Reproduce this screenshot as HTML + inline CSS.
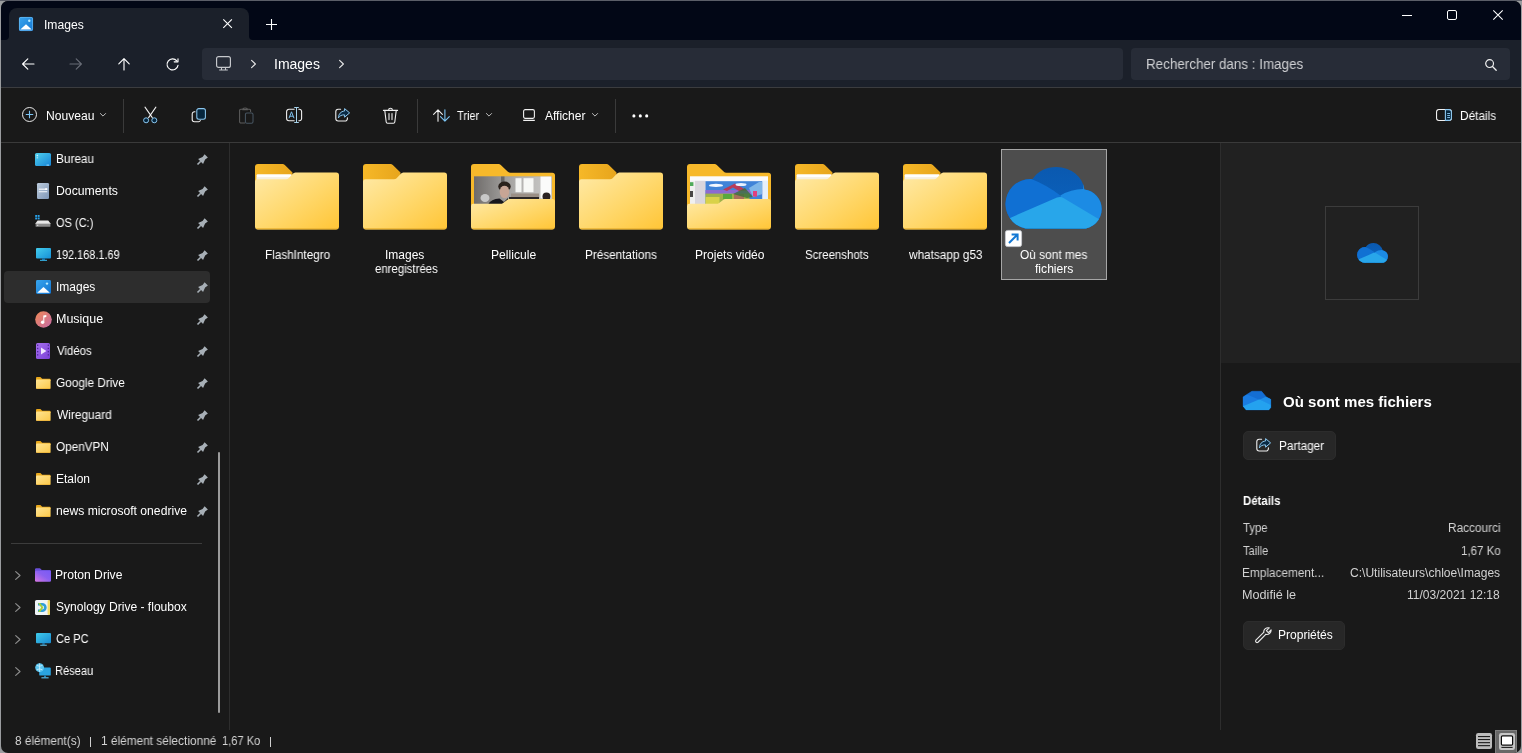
<!DOCTYPE html>
<html><head><meta charset="utf-8"><title>Images</title>
<style>
*{box-sizing:border-box;margin:0;padding:0}
html,body{width:1522px;height:753px;overflow:hidden;background:#9a9c9f;font-family:"Liberation Sans",sans-serif;color:#fff;font-size:12px}
.abs{position:absolute}
svg{overflow:visible}
#top{position:absolute;left:0;top:0;width:1522px;height:1px;background:#5b5e68}
#win{position:absolute;left:1px;top:1px;width:1520px;height:752px;background:#191919;border-radius:7px 7px 7px 7px;overflow:hidden}
.t{position:absolute;white-space:pre;transform-origin:0 0;will-change:transform}
</style></head><body>
<div id="top"></div>
<div id="win">
<div class="abs" style="left:0.00px;top:0.00px;width:1520px;height:39px;background:#020716"></div>
<div class="abs" style="left:8.00px;top:7.00px;width:240px;height:32px;background:#1b202a;border-radius:8px 8px 0 0"></div>
<svg class="abs" style="left:4.00px;top:35.00px;" width="4" height="4" viewBox="0 0 4 4"><path d="M4 0 V4 H0 A4 4 0 0 0 4 0Z" fill="#1b202a"/></svg>
<svg class="abs" style="left:248.00px;top:35.00px;" width="4" height="4" viewBox="0 0 4 4"><path d="M0 0 V4 H4 A4 4 0 0 1 0 0Z" fill="#1b202a"/></svg>
<svg class="abs" style="left:18.00px;top:16.00px;" width="14" height="14" viewBox="0 0 14 14"><defs><linearGradient id="tg" x1="0" y1="0" x2="1" y2="1"><stop offset="0" stop-color="#3aa5ee"/><stop offset="1" stop-color="#1477d2"/></linearGradient></defs>
<rect x="0" y="0" width="14" height="14" rx="1.6" fill="url(#tg)"/><rect x="0.4" y="0.4" width="13.2" height="13.2" rx="1.4" fill="none" stroke="#7cc6f7" stroke-width=".8" opacity=".7"/>
<path d="M1.3 12.6 L7 7.2 L12.7 12.6 Z" fill="#fff"/><circle cx="10.3" cy="3.7" r="1.2" fill="#b9ecff"/></svg>
<div class="t" style="left:42.58px;top:15.84px;font-size:12px;line-height:16px;transform:scaleX(1.0103);color:#fff;">Images</div>
<svg class="abs" style="left:222.00px;top:18.00px;" width="9" height="9" viewBox="0 0 9 9"><path d="M0.3 0.3 L8.9 8.9 M8.9 0.3 L0.3 8.9" stroke="#fff" stroke-width="1.1" fill="none"/></svg>
<svg class="abs" style="left:265.00px;top:18.00px;" width="11" height="11" viewBox="0 0 11 11"><path d="M5.5 0 V11 M0 5.5 H11" stroke="#fff" stroke-width="1.1" fill="none"/></svg>
<div class="abs" style="left:1401.00px;top:14.00px;width:10px;height:1px;background:#fff"></div>
<div class="abs" style="left:1446.00px;top:9.00px;width:10px;height:10px;border:1px solid #fff;border-radius:2px"></div>
<svg class="abs" style="left:1492.00px;top:9.00px;" width="10" height="10" viewBox="0 0 10 10"><path d="M0.3 0.3 L9.7 9.7 M9.7 0.3 L0.3 9.7" stroke="#fff" stroke-width="1.05" fill="none"/></svg>
<div class="abs" style="left:0.00px;top:39.00px;width:1520px;height:47px;background:#1b202a"></div>
<div class="abs" style="left:0.00px;top:86.00px;width:1520px;height:1px;background:#3b3c3f"></div>
<svg class="abs" style="left:21.00px;top:56.50px;" width="12" height="12" viewBox="0 0 12 12"><path d="M12 6 H0.8 M5.8 0.8 L0.6 6 L5.8 11.2" stroke="#fff" stroke-width="1.15" fill="none" stroke-linecap="round" stroke-linejoin="round"/></svg>
<svg class="abs" style="left:69.00px;top:56.50px;" width="12" height="12" viewBox="0 0 12 12"><path d="M0 6 H11.2 M6.2 0.8 L11.4 6 L6.2 11.2" stroke="#686c76" stroke-width="1.15" fill="none" stroke-linecap="round" stroke-linejoin="round"/></svg>
<svg class="abs" style="left:116.50px;top:57.00px;" width="12" height="12" viewBox="0 0 12 12"><path d="M6 12 V0.8 M0.8 5.8 L6 0.6 L11.2 5.8" stroke="#fff" stroke-width="1.15" fill="none" stroke-linecap="round" stroke-linejoin="round"/></svg>
<svg class="abs" style="left:164.50px;top:56.50px;" width="13" height="13" viewBox="0 0 13 13"><path d="M12 7.35 A5.5 5.5 0 1 1 10.8 2.86" stroke="#fff" stroke-width="1.15" fill="none" stroke-linecap="round"/><path d="M12 0.7 V3.8 H8.2" stroke="#fff" stroke-width="1.15" fill="none" stroke-linecap="round" stroke-linejoin="round"/></svg>
<div class="abs" style="left:201.00px;top:47.00px;width:921px;height:32px;background:#272c37;border-radius:4px"></div>
<svg class="abs" style="left:215.00px;top:55.00px;" width="15" height="15" viewBox="0 0 15 15"><rect x="0.6" y="0.6" width="13.8" height="10.8" rx="2" fill="none" stroke="#c6c8cc" stroke-width="1.15"/><path d="M5.5 11.5 V13.6 M9.5 11.5 V13.6 M3.2 14 H11.8" stroke="#c6c8cc" stroke-width="1.1" fill="none"/></svg>
<svg class="abs" style="left:250.00px;top:59.30px;" width="5" height="8" viewBox="0 0 5 8"><path d="M0.6 0.4 L4.4 4 L0.6 7.6" stroke="#e6e6e6" stroke-width="1.15" fill="none" stroke-linecap="round" stroke-linejoin="round"/></svg>
<div class="t" style="left:273.01px;top:53.85px;font-size:14px;line-height:18px;transform:scaleX(0.9975);color:#fff;">Images</div>
<svg class="abs" style="left:338.00px;top:59.30px;" width="5" height="8" viewBox="0 0 5 8"><path d="M0.6 0.4 L4.4 4 L0.6 7.6" stroke="#e6e6e6" stroke-width="1.15" fill="none" stroke-linecap="round" stroke-linejoin="round"/></svg>
<div class="abs" style="left:1130.00px;top:47.00px;width:379px;height:32px;background:#272c37;border-radius:4px"></div>
<div class="t" style="left:1144.60px;top:53.85px;font-size:14px;line-height:18px;transform:scaleX(0.9573);color:#cfd0d3;">Rechercher dans : Images</div>
<svg class="abs" style="left:1484.00px;top:57.50px;" width="12" height="12" viewBox="0 0 12 12"><circle cx="4.6" cy="4.6" r="3.9" fill="none" stroke="#f0f0f0" stroke-width="1.2"/><path d="M7.5 7.5 L11.2 11.2" stroke="#f0f0f0" stroke-width="1.3" stroke-linecap="round"/></svg>
<div class="abs" style="left:0.00px;top:141.00px;width:1520px;height:1px;background:#3a3a3a"></div>
<svg class="abs" style="left:21.00px;top:106.00px;" width="15" height="15" viewBox="0 0 15 15"><circle cx="7.5" cy="7.5" r="7" fill="none" stroke="#e8e8e8" stroke-width="1"/><path d="M7.5 3.8 V11.2 M3.8 7.5 H11.2" stroke="#7cc4f3" stroke-width="1.1" fill="none"/></svg>
<div class="t" style="left:44.51px;top:106.54px;font-size:12px;line-height:16px;transform:scaleX(1.0096);color:#fff;">Nouveau</div>
<svg class="abs" style="left:99.00px;top:112.30px;" width="6" height="4" viewBox="0 0 6 4"><path d="M0.4 0.5 L3 3.1 L5.6 0.5" stroke="#bdbdbd" stroke-width="1" fill="none" stroke-linecap="round" stroke-linejoin="round"/></svg>
<div class="abs" style="left:122.00px;top:98.00px;width:1px;height:34px;background:#3a3a3a"></div>
<svg class="abs" style="left:142.00px;top:105.00px;" width="15" height="18" viewBox="0 0 15 18"><path d="M2 1.1 L9.3 11.6 M12.9 1.1 L5.6 11.6" stroke="#f0f0f0" stroke-width="1.05" fill="none" stroke-linecap="round"/>
<circle cx="3.1" cy="14.3" r="2.5" fill="#04263f" stroke="#8cc8f0" stroke-width="1"/><circle cx="11.3" cy="14.3" r="2.5" fill="#04263f" stroke="#8cc8f0" stroke-width="1"/></svg>
<svg class="abs" style="left:189.50px;top:106.50px;" width="16" height="15" viewBox="0 0 16 15"><path d="M4 3.8 H3.4 A2.2 2.2 0 0 0 1.2 6 V11.6 A2.2 2.2 0 0 0 3.4 13.8 H7.6 A2 2 0 0 0 9.3 12.6" stroke="#f0f0f0" stroke-width="1.1" fill="none" stroke-linecap="round"/>
<rect x="5.8" y="0.6" width="8.6" height="10.6" rx="2" fill="#06263d" stroke="#8cc8f0" stroke-width="1.05"/></svg>
<svg class="abs" style="left:238.00px;top:105.50px;" width="15" height="17" viewBox="0 0 15 17"><path d="M6 16 H1.8 A1.2 1.2 0 0 1 0.6 14.8 V3.4 A1.2 1.2 0 0 1 1.8 2.2 H3.8 M8.4 2.2 H10.4 A1.2 1.2 0 0 1 11.6 3.4 V5" stroke="#5c5c5c" stroke-width="1.05" fill="none"/>
<path d="M3.8 2.6 A2.3 1.6 0 0 1 8.4 2.6 Z" stroke="#5c5c5c" stroke-width="1.05" fill="none"/>
<rect x="6.4" y="6" width="7.6" height="10.2" rx="1.5" fill="none" stroke="#475561" stroke-width="1.05"/></svg>
<svg class="abs" style="left:285.00px;top:106.00px;" width="16" height="16" viewBox="0 0 16 16"><path d="M8.6 2.3 H3 A2.4 2.4 0 0 0 0.6 4.7 V11.3 A2.4 2.4 0 0 0 3 13.7 H8.6 M12.4 2.3 H13.4 A2.2 2.2 0 0 1 15.6 4.5 V11.5 A2.2 2.2 0 0 1 13.4 13.7 H12.4" stroke="#f0f0f0" stroke-width="1.1" fill="none"/>
<path d="M8.2 0.5 H12.8 M8.2 15.5 H12.8 M10.5 0.5 V15.5" stroke="#a8d4ec" stroke-width="1.05" fill="none"/>
<path d="M3 11.2 L5.5 4.8 L8 11.2 M3.9 9.2 H7.1" stroke="#7cc0ee" stroke-width="1" fill="none" stroke-linejoin="round"/></svg>
<svg class="abs" style="left:334.00px;top:107.00px;" width="16" height="14" viewBox="0 0 16 14"><path d="M5.6 1.2 H3.2 A2.4 2.4 0 0 0 0.8 3.6 V10.6 A2.4 2.4 0 0 0 3.2 13 H10 A2.4 2.4 0 0 0 12.4 10.6 V9.8" stroke="#f0f0f0" stroke-width="1.1" fill="none" stroke-linecap="round"/>
<path d="M9.6 0.6 L14.6 4.9 L9.6 9.2 V6.9 C6.6 6.7 4.6 7.9 3.4 9.9 C3.6 6.1 5.8 3.3 9.6 3 Z" fill="#0a2a44" stroke="#8cc8f0" stroke-width="1" stroke-linejoin="round"/></svg>
<svg class="abs" style="left:381.50px;top:105.50px;" width="15" height="17" viewBox="0 0 15 17"><path d="M0.4 3.4 H14.6" stroke="#f0f0f0" stroke-width="1.1" stroke-linecap="round"/><path d="M5.6 3.2 A1.9 1.9 0 0 1 9.4 3.2" stroke="#f0f0f0" stroke-width="1.05" fill="none"/>
<path d="M1.8 3.6 L3.2 15 A1.4 1.4 0 0 0 4.6 16.2 H10.4 A1.4 1.4 0 0 0 11.8 15 L13.2 3.6" stroke="#f0f0f0" stroke-width="1.1" fill="none"/>
<path d="M6 6.6 V12.6 M9 6.6 V12.6" stroke="#f0f0f0" stroke-width="1.1" stroke-linecap="round"/></svg>
<div class="abs" style="left:416.00px;top:98.00px;width:1px;height:34px;background:#3a3a3a"></div>
<svg class="abs" style="left:431.50px;top:107.50px;" width="17" height="13" viewBox="0 0 17 13"><path d="M5 12.3 V0.9 M0.6 5.3 L5 0.8 L9.4 5.3" stroke="#f0f0f0" stroke-width="1.1" fill="none" stroke-linecap="round" stroke-linejoin="round"/>
<path d="M11.9 0.7 V12.1 M7.5 7.7 L11.9 12.2 L16.3 7.7" stroke="#7cc4f3" stroke-width="1.1" fill="none" stroke-linecap="round" stroke-linejoin="round"/></svg>
<div class="t" style="left:456.05px;top:106.54px;font-size:12px;line-height:16px;transform:scaleX(0.9176);color:#fff;">Trier</div>
<svg class="abs" style="left:485.30px;top:112.30px;" width="6" height="4" viewBox="0 0 6 4"><path d="M0.4 0.5 L3 3.1 L5.6 0.5" stroke="#bdbdbd" stroke-width="1" fill="none" stroke-linecap="round" stroke-linejoin="round"/></svg>
<svg class="abs" style="left:522.00px;top:108.00px;" width="12" height="12" viewBox="0 0 12 12"><rect x="0.6" y="0.6" width="10.8" height="8.8" rx="1.6" fill="none" stroke="#f0f0f0" stroke-width="1.1"/><path d="M0.2 11.4 H11.8" stroke="#f0f0f0" stroke-width="1.1"/></svg>
<div class="t" style="left:544.38px;top:106.54px;font-size:12px;line-height:16px;transform:scaleX(0.9936);color:#fff;">Afficher</div>
<svg class="abs" style="left:591.20px;top:112.30px;" width="6" height="4" viewBox="0 0 6 4"><path d="M0.4 0.5 L3 3.1 L5.6 0.5" stroke="#bdbdbd" stroke-width="1" fill="none" stroke-linecap="round" stroke-linejoin="round"/></svg>
<div class="abs" style="left:614.00px;top:98.00px;width:1px;height:34px;background:#3a3a3a"></div>
<svg class="abs" style="left:631.00px;top:113.00px;" width="17" height="4" viewBox="0 0 17 4"><circle cx="1.9" cy="1.9" r="1.55" fill="#fff"/><circle cx="8.3" cy="1.9" r="1.55" fill="#fff"/><circle cx="14.7" cy="1.9" r="1.55" fill="#fff"/></svg>
<svg class="abs" style="left:1435.00px;top:108.00px;" width="16" height="12" viewBox="0 0 16 12"><rect x="0.55" y="0.55" width="14.9" height="10.9" rx="2.4" fill="none" stroke="#f0f0f0" stroke-width="1.1"/>
<path d="M9.4 0.6 H13 A2.4 2.4 0 0 1 15.4 3 V9 A2.4 2.4 0 0 1 13 11.4 H9.4 Z" fill="#06263d" stroke="#8cc8f0" stroke-width="1.1"/>
<path d="M11.2 4.5 H14 M11.2 6.5 H14 M11.2 8.5 H14" stroke="#8cc8f0" stroke-width="0.9"/></svg>
<div class="t" style="left:1458.83px;top:106.84px;font-size:12px;line-height:16px;transform:scaleX(0.9841);color:#fff;">Détails</div>
<div class="abs" style="left:228.00px;top:142.00px;width:1px;height:587px;background:#2d2d2d"></div>
<div class="abs" style="left:3.00px;top:270.00px;width:206px;height:32px;background:#2d2d2d;border-radius:4px"></div>
<div class="abs" style="left:217.00px;top:451.00px;width:2px;height:261px;background:#9b9b9b;border-radius:1px"></div>
<div class="abs" style="left:10.00px;top:542.00px;width:191px;height:1px;background:#3c3c3c"></div>
<svg class="abs" style="left:34.00px;top:151.50px;" width="16" height="13" viewBox="0 0 16 13"><defs><linearGradient id="bu" x1="0" y1="0" x2="1" y2="1"><stop offset="0" stop-color="#4fd0ee"/><stop offset="1" stop-color="#1784d6"/></linearGradient></defs>
<rect width="16" height="13" rx="1.6" fill="url(#bu)"/><rect x="1.6" y="1.8" width="1.5" height="1.5" fill="#c9f2ff"/><rect x="1.6" y="4.2" width="1.5" height="1.2" fill="#aee6fb"/><rect x="11.5" y="11.6" width="2.5" height="1" fill="#9cdcff"/></svg>
<div class="t" style="left:54.63px;top:149.74px;font-size:12px;line-height:16px;transform:scaleX(0.9834);color:#fff;">Bureau</div>
<svg class="abs" style="left:195.50px;top:152.90px;" width="11" height="11" viewBox="0 0 11 11"><g transform="rotate(45 5.5 5.5)"><path d="M3.2 0.2 H7.8 L7.3 3.6 L9 8.2 H2 L3.7 3.6 Z" fill="#a7afb6"/><path d="M5.5 8 V12.6" stroke="#a7afb6" stroke-width="1.6"/></g></svg>
<svg class="abs" style="left:36.00px;top:182.00px;" width="12" height="16" viewBox="0 0 12 16"><defs><linearGradient id="dc" x1="0" y1="0" x2="1" y2="1"><stop offset="0" stop-color="#bccbdc"/><stop offset="1" stop-color="#7f97b8"/></linearGradient></defs>
<rect width="12" height="16" rx="1.2" fill="url(#dc)"/><rect x="1.8" y="5.6" width="8.4" height="1.2" fill="#f3f6fa"/><rect x="1.8" y="8" width="8.4" height="1.3" fill="#e1e8f1"/><rect x="8.2" y="5.2" width="2" height="1.8" fill="#fff"/></svg>
<div class="t" style="left:54.60px;top:181.74px;font-size:12px;line-height:16px;transform:scaleX(1.0207);color:#fff;">Documents</div>
<svg class="abs" style="left:195.50px;top:184.90px;" width="11" height="11" viewBox="0 0 11 11"><g transform="rotate(45 5.5 5.5)"><path d="M3.2 0.2 H7.8 L7.3 3.6 L9 8.2 H2 L3.7 3.6 Z" fill="#a7afb6"/><path d="M5.5 8 V12.6" stroke="#a7afb6" stroke-width="1.6"/></g></svg>
<svg class="abs" style="left:34.00px;top:214.20px;" width="16" height="12" viewBox="0 0 16 12"><rect x="0.2" y="0" width="1.9" height="1.9" fill="#29a3ec"/><rect x="2.7" y="0" width="1.9" height="1.9" fill="#29a3ec"/><rect x="0.2" y="2.5" width="1.9" height="1.9" fill="#29a3ec"/><rect x="2.7" y="2.5" width="1.9" height="1.9" fill="#29a3ec"/>
<path d="M2.6 5.4 H13.2 L15.4 8.2 H0.6 Z" fill="#e8e8e8"/><rect x="0.6" y="8" width="14.8" height="3.8" rx="0.6" fill="#8c8c8c"/><rect x="0.6" y="8" width="14.8" height="1" fill="#c9c9c9"/><rect x="2" y="9.8" width="1.3" height="1" fill="#e0e0e0"/></svg>
<div class="t" style="left:55.08px;top:213.74px;font-size:12px;line-height:16px;transform:scaleX(0.9174);color:#fff;">OS (C:)</div>
<svg class="abs" style="left:195.50px;top:216.90px;" width="11" height="11" viewBox="0 0 11 11"><g transform="rotate(45 5.5 5.5)"><path d="M3.2 0.2 H7.8 L7.3 3.6 L9 8.2 H2 L3.7 3.6 Z" fill="#a7afb6"/><path d="M5.5 8 V12.6" stroke="#a7afb6" stroke-width="1.6"/></g></svg>
<svg class="abs" style="left:34.60px;top:247.00px;" width="15" height="13" viewBox="0 0 15 13"><defs><linearGradient id="mo" x1="0" y1="0" x2="1" y2="1"><stop offset="0" stop-color="#43cdee"/><stop offset="1" stop-color="#1690d6"/></linearGradient></defs>
<rect width="15" height="10.4" rx="1" fill="url(#mo)"/><rect x="6" y="10.4" width="3" height="1.5" fill="#1379b8"/><rect x="4" y="11.8" width="7" height="1.1" fill="#35aee0"/></svg>
<div class="t" style="left:55.17px;top:245.74px;font-size:12px;line-height:16px;transform:scaleX(0.9069);color:#fff;">192.168.1.69</div>
<svg class="abs" style="left:195.50px;top:248.90px;" width="11" height="11" viewBox="0 0 11 11"><g transform="rotate(45 5.5 5.5)"><path d="M3.2 0.2 H7.8 L7.3 3.6 L9 8.2 H2 L3.7 3.6 Z" fill="#a7afb6"/><path d="M5.5 8 V12.6" stroke="#a7afb6" stroke-width="1.6"/></g></svg>
<svg class="abs" style="left:34.60px;top:278.80px;" width="15" height="14" viewBox="0 0 15 14"><defs><linearGradient id="im" x1="0" y1="0" x2="1" y2="1"><stop offset="0" stop-color="#38a6ef"/><stop offset="1" stop-color="#1273cf"/></linearGradient></defs>
<rect width="15" height="14" rx="1.4" fill="url(#im)"/><path d="M1.2 12.8 L7.5 7 L13.8 12.8 Z" fill="#fff"/><circle cx="11" cy="3.6" r="1.2" fill="#b9ecff"/></svg>
<div class="t" style="left:54.50px;top:277.74px;font-size:12px;line-height:16px;transform:scaleX(0.9918);color:#fff;">Images</div>
<svg class="abs" style="left:195.50px;top:280.90px;" width="11" height="11" viewBox="0 0 11 11"><g transform="rotate(45 5.5 5.5)"><path d="M3.2 0.2 H7.8 L7.3 3.6 L9 8.2 H2 L3.7 3.6 Z" fill="#a7afb6"/><path d="M5.5 8 V12.6" stroke="#a7afb6" stroke-width="1.6"/></g></svg>
<svg class="abs" style="left:33.50px;top:309.60px;" width="17" height="17" viewBox="0 0 17 17"><defs><linearGradient id="mu" x1="0" y1="0" x2="1" y2="1"><stop offset="0" stop-color="#f08a56"/><stop offset="1" stop-color="#c56aa6"/></linearGradient></defs>
<circle cx="8.5" cy="8.5" r="8.3" fill="url(#mu)"/><path d="M8.3 11.2 V4.6 L11.3 4 V6 L9.3 6.4 V11.2" fill="#fff"/><circle cx="7.6" cy="11.3" r="1.7" fill="#fff"/></svg>
<div class="t" style="left:54.58px;top:309.74px;font-size:12px;line-height:16px;transform:scaleX(1.0401);color:#fff;">Musique</div>
<svg class="abs" style="left:195.50px;top:312.90px;" width="11" height="11" viewBox="0 0 11 11"><g transform="rotate(45 5.5 5.5)"><path d="M3.2 0.2 H7.8 L7.3 3.6 L9 8.2 H2 L3.7 3.6 Z" fill="#a7afb6"/><path d="M5.5 8 V12.6" stroke="#a7afb6" stroke-width="1.6"/></g></svg>
<svg class="abs" style="left:34.90px;top:342.00px;" width="14" height="16" viewBox="0 0 14 16"><defs><linearGradient id="vi" x1="0" y1="0" x2="1" y2="1"><stop offset="0" stop-color="#a670ee"/><stop offset="1" stop-color="#7a3fd6"/></linearGradient></defs>
<rect width="14" height="16" rx="1.5" fill="url(#vi)"/><path d="M5 4.6 L10.4 8 L5 11.4 Z" fill="#f0e6ff"/>
<g fill="#4d2799"><rect x="1" y="1.6" width="1.3" height="1.3"/><rect x="1" y="4.8" width="1.3" height="1.3"/><rect x="1" y="8" width="1.3" height="1.3"/><rect x="1" y="11.2" width="1.3" height="1.3"/><rect x="11.7" y="1.6" width="1.3" height="1.3"/><rect x="11.7" y="4.8" width="1.3" height="1.3"/><rect x="11.7" y="8" width="1.3" height="1.3"/><rect x="11.7" y="11.2" width="1.3" height="1.3"/></g></svg>
<div class="t" style="left:55.55px;top:341.74px;font-size:12px;line-height:16px;transform:scaleX(0.9501);color:#fff;">Vidéos</div>
<svg class="abs" style="left:195.50px;top:344.90px;" width="11" height="11" viewBox="0 0 11 11"><g transform="rotate(45 5.5 5.5)"><path d="M3.2 0.2 H7.8 L7.3 3.6 L9 8.2 H2 L3.7 3.6 Z" fill="#a7afb6"/><path d="M5.5 8 V12.6" stroke="#a7afb6" stroke-width="1.6"/></g></svg>
<svg class="abs" style="left:34.60px;top:376.00px;" width="14.6" height="12" viewBox="0 0 14.6 12"><defs><linearGradient id="fs" x1="0" y1="0" x2="1" y2="1"><stop offset="0" stop-color="#ffe594"/><stop offset="1" stop-color="#fbc849"/></linearGradient></defs>
<path d="M0 1.1 A1 1 0 0 1 1 0.1 H4.4 L6.2 1.8 H13.6 A1 1 0 0 1 14.6 2.8 V4 H0 Z" fill="#e9a81c"/>
<rect x="0" y="2.5" width="14.6" height="9.5" rx="1" fill="url(#fs)"/><rect x="0.4" y="11.3" width="13.8" height=".7" fill="#e2a82e" opacity=".8"/></svg>
<div class="t" style="left:55.01px;top:373.74px;font-size:12px;line-height:16px;transform:scaleX(0.9841);color:#fff;">Google Drive</div>
<svg class="abs" style="left:195.50px;top:376.90px;" width="11" height="11" viewBox="0 0 11 11"><g transform="rotate(45 5.5 5.5)"><path d="M3.2 0.2 H7.8 L7.3 3.6 L9 8.2 H2 L3.7 3.6 Z" fill="#a7afb6"/><path d="M5.5 8 V12.6" stroke="#a7afb6" stroke-width="1.6"/></g></svg>
<svg class="abs" style="left:34.60px;top:408.00px;" width="14.6" height="12" viewBox="0 0 14.6 12"><defs><linearGradient id="fs" x1="0" y1="0" x2="1" y2="1"><stop offset="0" stop-color="#ffe594"/><stop offset="1" stop-color="#fbc849"/></linearGradient></defs>
<path d="M0 1.1 A1 1 0 0 1 1 0.1 H4.4 L6.2 1.8 H13.6 A1 1 0 0 1 14.6 2.8 V4 H0 Z" fill="#e9a81c"/>
<rect x="0" y="2.5" width="14.6" height="9.5" rx="1" fill="url(#fs)"/><rect x="0.4" y="11.3" width="13.8" height=".7" fill="#e2a82e" opacity=".8"/></svg>
<div class="t" style="left:55.55px;top:405.74px;font-size:12px;line-height:16px;transform:scaleX(0.9885);color:#fff;">Wireguard</div>
<svg class="abs" style="left:195.50px;top:408.90px;" width="11" height="11" viewBox="0 0 11 11"><g transform="rotate(45 5.5 5.5)"><path d="M3.2 0.2 H7.8 L7.3 3.6 L9 8.2 H2 L3.7 3.6 Z" fill="#a7afb6"/><path d="M5.5 8 V12.6" stroke="#a7afb6" stroke-width="1.6"/></g></svg>
<svg class="abs" style="left:34.60px;top:440.00px;" width="14.6" height="12" viewBox="0 0 14.6 12"><defs><linearGradient id="fs" x1="0" y1="0" x2="1" y2="1"><stop offset="0" stop-color="#ffe594"/><stop offset="1" stop-color="#fbc849"/></linearGradient></defs>
<path d="M0 1.1 A1 1 0 0 1 1 0.1 H4.4 L6.2 1.8 H13.6 A1 1 0 0 1 14.6 2.8 V4 H0 Z" fill="#e9a81c"/>
<rect x="0" y="2.5" width="14.6" height="9.5" rx="1" fill="url(#fs)"/><rect x="0.4" y="11.3" width="13.8" height=".7" fill="#e2a82e" opacity=".8"/></svg>
<div class="t" style="left:55.04px;top:437.74px;font-size:12px;line-height:16px;transform:scaleX(0.9794);color:#fff;">OpenVPN</div>
<svg class="abs" style="left:195.50px;top:440.90px;" width="11" height="11" viewBox="0 0 11 11"><g transform="rotate(45 5.5 5.5)"><path d="M3.2 0.2 H7.8 L7.3 3.6 L9 8.2 H2 L3.7 3.6 Z" fill="#a7afb6"/><path d="M5.5 8 V12.6" stroke="#a7afb6" stroke-width="1.6"/></g></svg>
<svg class="abs" style="left:34.60px;top:472.00px;" width="14.6" height="12" viewBox="0 0 14.6 12"><defs><linearGradient id="fs" x1="0" y1="0" x2="1" y2="1"><stop offset="0" stop-color="#ffe594"/><stop offset="1" stop-color="#fbc849"/></linearGradient></defs>
<path d="M0 1.1 A1 1 0 0 1 1 0.1 H4.4 L6.2 1.8 H13.6 A1 1 0 0 1 14.6 2.8 V4 H0 Z" fill="#e9a81c"/>
<rect x="0" y="2.5" width="14.6" height="9.5" rx="1" fill="url(#fs)"/><rect x="0.4" y="11.3" width="13.8" height=".7" fill="#e2a82e" opacity=".8"/></svg>
<div class="t" style="left:54.62px;top:469.74px;font-size:12px;line-height:16px;transform:scaleX(0.9919);color:#fff;">Etalon</div>
<svg class="abs" style="left:195.50px;top:472.90px;" width="11" height="11" viewBox="0 0 11 11"><g transform="rotate(45 5.5 5.5)"><path d="M3.2 0.2 H7.8 L7.3 3.6 L9 8.2 H2 L3.7 3.6 Z" fill="#a7afb6"/><path d="M5.5 8 V12.6" stroke="#a7afb6" stroke-width="1.6"/></g></svg>
<svg class="abs" style="left:34.60px;top:504.00px;" width="14.6" height="12" viewBox="0 0 14.6 12"><defs><linearGradient id="fs" x1="0" y1="0" x2="1" y2="1"><stop offset="0" stop-color="#ffe594"/><stop offset="1" stop-color="#fbc849"/></linearGradient></defs>
<path d="M0 1.1 A1 1 0 0 1 1 0.1 H4.4 L6.2 1.8 H13.6 A1 1 0 0 1 14.6 2.8 V4 H0 Z" fill="#e9a81c"/>
<rect x="0" y="2.5" width="14.6" height="9.5" rx="1" fill="url(#fs)"/><rect x="0.4" y="11.3" width="13.8" height=".7" fill="#e2a82e" opacity=".8"/></svg>
<div class="t" style="left:54.79px;top:501.74px;font-size:12px;line-height:16px;transform:scaleX(1.0121);color:#fff;">news microsoft onedrive</div>
<svg class="abs" style="left:195.50px;top:504.90px;" width="11" height="11" viewBox="0 0 11 11"><g transform="rotate(45 5.5 5.5)"><path d="M3.2 0.2 H7.8 L7.3 3.6 L9 8.2 H2 L3.7 3.6 Z" fill="#a7afb6"/><path d="M5.5 8 V12.6" stroke="#a7afb6" stroke-width="1.6"/></g></svg>
<svg class="abs" style="left:34.00px;top:567.00px;" width="16" height="14" viewBox="0 0 16 14"><defs><linearGradient id="pr" x1="1" y1="0" x2="0" y2="1"><stop offset="0" stop-color="#7a5af5"/><stop offset=".45" stop-color="#8a60f0"/><stop offset="1" stop-color="#d878e2"/></linearGradient></defs>
<path d="M0 1.4 A1.2 1.2 0 0 1 1.2 0.2 H5 L6.8 2 H14.8 A1.2 1.2 0 0 1 16 3.2 V5 H0 Z" fill="#6a4fd8"/><rect y="2.8" width="16" height="11" rx="1.3" fill="url(#pr)"/></svg>
<div class="t" style="left:54.30px;top:565.74px;font-size:12px;line-height:16px;transform:scaleX(1.0111);color:#fff;">Proton Drive</div>
<svg class="abs" style="left:14.00px;top:570.30px;" width="6" height="9" viewBox="0 0 6 9"><path d="M0.7 0.6 L5 4.5 L0.7 8.4" stroke="#8b8b8b" stroke-width="1.2" fill="none" stroke-linecap="round" stroke-linejoin="round"/></svg>
<svg class="abs" style="left:34.20px;top:598.50px;" width="15" height="15" viewBox="0 0 15 15"><rect width="15" height="15" rx="1.5" fill="#eef3f6"/><path d="M3 3 H7.2 A4.5 4.5 0 0 1 7.2 12 H3 V9.6 H7 A2.1 2.1 0 0 0 7 5.4 H3 Z" fill="#2e9ed9"/><path d="M3 3 H5.2 L8.4 7.5 L5.2 12 H3 L6.2 7.5 Z" fill="#a4cf3a"/><rect x="12.6" y="0" width="2.4" height="15" rx="1" fill="#f2d64a" opacity=".85"/></svg>
<div class="t" style="left:54.75px;top:597.74px;font-size:12px;line-height:16px;transform:scaleX(1.0055);color:#fff;">Synology Drive - floubox</div>
<svg class="abs" style="left:14.00px;top:602.30px;" width="6" height="9" viewBox="0 0 6 9"><path d="M0.7 0.6 L5 4.5 L0.7 8.4" stroke="#8b8b8b" stroke-width="1.2" fill="none" stroke-linecap="round" stroke-linejoin="round"/></svg>
<svg class="abs" style="left:34.60px;top:631.50px;" width="15" height="13" viewBox="0 0 15 13"><defs><linearGradient id="pc" x1="0" y1="0" x2="1" y2="1"><stop offset="0" stop-color="#3fcbea"/><stop offset="1" stop-color="#1a8bd2"/></linearGradient></defs>
<rect width="15" height="10.2" rx="1" fill="url(#pc)"/><rect x="6.3" y="10.2" width="2.4" height="1.6" fill="#1b7bb5"/><rect x="4.2" y="11.7" width="6.6" height="1.1" fill="#5fb8dd"/></svg>
<div class="t" style="left:54.74px;top:629.74px;font-size:12px;line-height:16px;transform:scaleX(0.9190);color:#fff;">Ce PC</div>
<svg class="abs" style="left:14.00px;top:634.30px;" width="6" height="9" viewBox="0 0 6 9"><path d="M0.7 0.6 L5 4.5 L0.7 8.4" stroke="#8b8b8b" stroke-width="1.2" fill="none" stroke-linecap="round" stroke-linejoin="round"/></svg>
<svg class="abs" style="left:34.00px;top:662.00px;" width="16" height="16" viewBox="0 0 16 16"><rect x="4.2" y="4.6" width="11.6" height="8" rx="0.9" fill="#2aa4e0"/><rect x="9" y="12.6" width="2" height="1.8" fill="#1d82ba"/><rect x="6.4" y="14.2" width="7.2" height="1.2" fill="#56b6e2"/>
<circle cx="4.6" cy="4.6" r="4.4" fill="#5cc5ef"/><path d="M1.8 2.4 Q4.6 4.2 7.4 2.4 M1.8 6.8 Q4.6 5 7.4 6.8 M4.6 0.3 V8.9" stroke="#c9efff" stroke-width=".8" fill="none"/></svg>
<div class="t" style="left:54.39px;top:661.74px;font-size:12px;line-height:16px;transform:scaleX(0.9247);color:#fff;">Réseau</div>
<svg class="abs" style="left:14.00px;top:666.30px;" width="6" height="9" viewBox="0 0 6 9"><path d="M0.7 0.6 L5 4.5 L0.7 8.4" stroke="#8b8b8b" stroke-width="1.2" fill="none" stroke-linecap="round" stroke-linejoin="round"/></svg>
<div class="t" style="left:13.69px;top:732.44px;font-size:12px;line-height:16px;transform:scaleX(0.9828);color:#d4d4d4;">8 élément(s)</div>
<div class="abs" style="left:89.00px;top:736.00px;width:1px;height:10px;background:#d0d0d0"></div>
<div class="t" style="left:100.10px;top:732.44px;font-size:12px;line-height:16px;transform:scaleX(0.9879);color:#d4d4d4;">1 élément sélectionné</div>
<div class="t" style="left:220.76px;top:732.44px;font-size:12px;line-height:16px;transform:scaleX(0.9237);color:#d4d4d4;">1,67 Ko</div>
<div class="abs" style="left:269.00px;top:736.00px;width:1px;height:10px;background:#d0d0d0"></div>
<svg class="abs" style="left:1475.00px;top:732.00px;" width="16" height="16" viewBox="0 0 16 16"><rect x="0" y="0" width="16" height="16" rx="2.2" fill="#bcbcbc"/><path d="M2 3.6 H14 M2 6.6 H14 M2 9.7 H14 M2 12.7 H14" stroke="#0c0c0c" stroke-width="1"/></svg>
<div class="abs" style="left:1494.00px;top:729.00px;width:22px;height:23px;background:#686868;border:1px solid #808080;border-bottom:none"></div>
<svg class="abs" style="left:1498.00px;top:732.00px;" width="16" height="17" viewBox="0 0 16 17"><rect x="0" y="0" width="16" height="17" rx="2.2" fill="#c6c6c6"/><rect x="2.4" y="2.8" width="11.2" height="9.4" rx="1.2" fill="#fff" stroke="#0c0c0c" stroke-width="1.2"/><path d="M2.4 14.4 H13.6" stroke="#111" stroke-width="1"/></svg>
<svg class="abs" style="left:254.00px;top:162.80px;" width="84" height="66" viewBox="0 0 84 66"><defs><linearGradient id="ff1" x1="0" y1="0" x2="1" y2="1"><stop offset="0" stop-color="#ffeaa8"/><stop offset=".55" stop-color="#ffd769"/><stop offset="1" stop-color="#ffc536"/></linearGradient>
<linearGradient id="fb1" x1="0" y1="0" x2="1" y2="0"><stop offset="0" stop-color="#f6b828"/><stop offset="1" stop-color="#e7a51c"/></linearGradient>
<clipPath id="fc1"><rect x="3" y="12.2" width="78" height="28.4"/></clipPath></defs><path d="M0 3 A3 3 0 0 1 3 0 H27.5 A3 3 0 0 1 29.8 1.1 L37.5 8.6 V20 H0 Z" fill="url(#fb1)"/><rect x="1.6" y="10.2" width="35" height="7" rx="1" fill="#fff"/><rect x="1.6" y="13.2" width="35" height="4" fill="#f2ead2" opacity=".7"/><path d="M0 17.6 A2.4 2.4 0 0 1 2.4 15.2 H31 A4 4 0 0 0 33.6 14.2 L37.6 10 A4 4 0 0 1 40.4 8.6 H81.2 A2.8 2.8 0 0 1 84 11.4 V62.6 A3 3 0 0 1 81 65.6 H3 A3 3 0 0 1 0 62.6 Z" fill="url(#ff1)"/><path d="M0.6 64 A3 3 0 0 0 3 65.6 H81 A3 3 0 0 0 83.4 64 Z" fill="#eab232" opacity=".75"/></svg>
<svg class="abs" style="left:362.00px;top:162.80px;" width="84" height="66" viewBox="0 0 84 66"><defs><linearGradient id="ff2" x1="0" y1="0" x2="1" y2="1"><stop offset="0" stop-color="#ffeaa8"/><stop offset=".55" stop-color="#ffd769"/><stop offset="1" stop-color="#ffc536"/></linearGradient>
<linearGradient id="fb2" x1="0" y1="0" x2="1" y2="0"><stop offset="0" stop-color="#f6b828"/><stop offset="1" stop-color="#e7a51c"/></linearGradient>
<clipPath id="fc2"><rect x="3" y="12.2" width="78" height="28.4"/></clipPath></defs><path d="M0 3 A3 3 0 0 1 3 0 H27.5 A3 3 0 0 1 29.8 1.1 L37.5 8.6 V20 H0 Z" fill="url(#fb2)"/><path d="M0 17.6 A2.4 2.4 0 0 1 2.4 15.2 H31 A4 4 0 0 0 33.6 14.2 L37.6 10 A4 4 0 0 1 40.4 8.6 H81.2 A2.8 2.8 0 0 1 84 11.4 V62.6 A3 3 0 0 1 81 65.6 H3 A3 3 0 0 1 0 62.6 Z" fill="url(#ff2)"/><path d="M0.6 64 A3 3 0 0 0 3 65.6 H81 A3 3 0 0 0 83.4 64 Z" fill="#eab232" opacity=".75"/></svg>
<svg class="abs" style="left:470.00px;top:162.80px;" width="84" height="66" viewBox="0 0 84 66"><defs><linearGradient id="ff3" x1="0" y1="0" x2="1" y2="1"><stop offset="0" stop-color="#ffeaa8"/><stop offset=".55" stop-color="#ffd769"/><stop offset="1" stop-color="#ffc536"/></linearGradient>
<linearGradient id="fb3" x1="0" y1="0" x2="1" y2="0"><stop offset="0" stop-color="#f6b828"/><stop offset="1" stop-color="#e7a51c"/></linearGradient>
<clipPath id="fc3"><rect x="3" y="12.2" width="78" height="28.4"/></clipPath></defs><path d="M0 3 A3 3 0 0 1 3 0 H27.5 A3 3 0 0 1 29.8 1.1 L36.6 7.6 A4 4 0 0 0 39.4 8.8 H81.2 A2.8 2.8 0 0 1 84 11.6 V62 H0 Z" fill="#f7b92b"/><filter id="bl3" x="-5%" y="-5%" width="110%" height="110%"><feGaussianBlur stdDeviation="0.45"/></filter><g clip-path="url(#fc3)"><g filter="url(#bl3)"><rect x="3" y="12.2" width="78" height="28.4" fill="#8a8988"/>
<linearGradient id="tw" x1="0" y1="0" x2="1" y2="0"><stop offset="0" stop-color="#6f6c6a"/><stop offset=".35" stop-color="#9a9896"/><stop offset=".6" stop-color="#b4b3b1"/><stop offset="1" stop-color="#c9c9c8"/></linearGradient>
<rect x="3" y="12.2" width="78" height="28.4" fill="url(#tw)"/>
<rect x="30" y="12.2" width="3.5" height="9" fill="#6a6866"/>
<rect x="44.5" y="14.2" width="6" height="14" fill="#f4f5f3"/><rect x="52.5" y="14.2" width="10" height="14" fill="#f7f8f6"/><rect x="69.5" y="12.4" width="10.5" height="22" fill="#fbfbfa"/>
<rect x="40" y="29.5" width="28" height="3.5" fill="#9a8f86"/><rect x="38" y="33" width="30" height="2.2" fill="#2c2826"/>
<ellipse cx="75.5" cy="32.5" rx="4" ry="4" fill="#2b2422"/>
<ellipse cx="14" cy="34" rx="4.5" ry="4" fill="#c8c8c8"/>
<ellipse cx="33.5" cy="22.5" rx="6.2" ry="5" fill="#2a211e"/>
<ellipse cx="33.5" cy="27.8" rx="4.8" ry="6.4" fill="#c7a595"/>
<path d="M27.8 23.6 Q33.5 19.5 39.2 23.6 L39 21 Q33.5 16.8 28 21 Z" fill="#2a211e"/>
<path d="M17 40.6 Q20 34.6 28.5 34.4 L33 38 L37 34 V40.6 Z" fill="#18171a"/></g></g><path d="M0 42.2 A2.4 2.4 0 0 1 2.4 39.8 H29.5 A4 4 0 0 0 32.1 38.9 L36.1 36 A4 4 0 0 1 38.7 35 H81.2 A2.8 2.8 0 0 1 84 37.8 V62.6 A3 3 0 0 1 81 65.6 H3 A3 3 0 0 1 0 62.6 Z" fill="url(#ff3)"/><path d="M0.6 64 A3 3 0 0 0 3 65.6 H81 A3 3 0 0 0 83.4 64 Z" fill="#eab232" opacity=".75"/></svg>
<svg class="abs" style="left:578.00px;top:162.80px;" width="84" height="66" viewBox="0 0 84 66"><defs><linearGradient id="ff4" x1="0" y1="0" x2="1" y2="1"><stop offset="0" stop-color="#ffeaa8"/><stop offset=".55" stop-color="#ffd769"/><stop offset="1" stop-color="#ffc536"/></linearGradient>
<linearGradient id="fb4" x1="0" y1="0" x2="1" y2="0"><stop offset="0" stop-color="#f6b828"/><stop offset="1" stop-color="#e7a51c"/></linearGradient>
<clipPath id="fc4"><rect x="3" y="12.2" width="78" height="28.4"/></clipPath></defs><path d="M0 3 A3 3 0 0 1 3 0 H27.5 A3 3 0 0 1 29.8 1.1 L37.5 8.6 V20 H0 Z" fill="url(#fb4)"/><path d="M0 17.6 A2.4 2.4 0 0 1 2.4 15.2 H31 A4 4 0 0 0 33.6 14.2 L37.6 10 A4 4 0 0 1 40.4 8.6 H81.2 A2.8 2.8 0 0 1 84 11.4 V62.6 A3 3 0 0 1 81 65.6 H3 A3 3 0 0 1 0 62.6 Z" fill="url(#ff4)"/><path d="M0.6 64 A3 3 0 0 0 3 65.6 H81 A3 3 0 0 0 83.4 64 Z" fill="#eab232" opacity=".75"/></svg>
<svg class="abs" style="left:686.00px;top:162.80px;" width="84" height="66" viewBox="0 0 84 66"><defs><linearGradient id="ff5" x1="0" y1="0" x2="1" y2="1"><stop offset="0" stop-color="#ffeaa8"/><stop offset=".55" stop-color="#ffd769"/><stop offset="1" stop-color="#ffc536"/></linearGradient>
<linearGradient id="fb5" x1="0" y1="0" x2="1" y2="0"><stop offset="0" stop-color="#f6b828"/><stop offset="1" stop-color="#e7a51c"/></linearGradient>
<clipPath id="fc5"><rect x="3" y="12.2" width="78" height="28.4"/></clipPath></defs><path d="M0 3 A3 3 0 0 1 3 0 H27.5 A3 3 0 0 1 29.8 1.1 L36.6 7.6 A4 4 0 0 0 39.4 8.8 H81.2 A2.8 2.8 0 0 1 84 11.6 V62 H0 Z" fill="#f7b92b"/><filter id="bl5" x="-5%" y="-5%" width="110%" height="110%"><feGaussianBlur stdDeviation="0.45"/></filter><g clip-path="url(#fc5)"><g filter="url(#bl5)"><rect x="3" y="12.2" width="78" height="28.4" fill="#f4f4f6"/>
<rect x="3" y="12.2" width="78" height="4.6" fill="#fbfbfd"/>
<rect x="3" y="16.8" width="5" height="24" fill="#f0f0f0"/><rect x="3" y="18.2" width="3.4" height="3.8" fill="#4faa5a"/><rect x="3" y="27" width="3" height="6" fill="#4a4646"/>
<rect x="8" y="16.8" width="10.5" height="24" fill="#d9d6dd"/>
<rect x="18.5" y="17.2" width="57" height="23.4" fill="#3f83d8"/>
<rect x="18.5" y="26" width="57" height="4.4" fill="#8b6ad0"/>
<rect x="18.5" y="29.6" width="44" height="11" fill="#9fb348"/>
<rect x="18.5" y="33" width="14" height="7.6" fill="#d9d24a"/>
<rect x="36" y="30" width="9" height="5" fill="#58a83e"/><rect x="47" y="30" width="10" height="5" fill="#a8705a"/>
<path d="M36 25.5 L48 19.5 L60 26.5 L52 27 L46 23.4 L40 27 Z" fill="#b83a58"/>
<path d="M46 30 L58 24 L66 33 L60 34 Z" fill="#3b6f3a" opacity=".8"/>
<ellipse cx="29" cy="21.4" rx="7" ry="1.7" fill="#f4f8ff"/><ellipse cx="54" cy="20.6" rx="5.5" ry="1.5" fill="#e8f0ff"/>
<path d="M62 24 L72 18 L75.5 18 V30 L66 33 Z" fill="#7fb6e8"/><rect x="66" y="27" width="4" height="5.6" fill="#e0407e"/>
<rect x="75.5" y="16.8" width="5.5" height="24" fill="#e6f0fb"/></g></g><path d="M0 42.2 A2.4 2.4 0 0 1 2.4 39.8 H29.5 A4 4 0 0 0 32.1 38.9 L36.1 36 A4 4 0 0 1 38.7 35 H81.2 A2.8 2.8 0 0 1 84 37.8 V62.6 A3 3 0 0 1 81 65.6 H3 A3 3 0 0 1 0 62.6 Z" fill="url(#ff5)"/><path d="M0.6 64 A3 3 0 0 0 3 65.6 H81 A3 3 0 0 0 83.4 64 Z" fill="#eab232" opacity=".75"/></svg>
<svg class="abs" style="left:794.00px;top:162.80px;" width="84" height="66" viewBox="0 0 84 66"><defs><linearGradient id="ff6" x1="0" y1="0" x2="1" y2="1"><stop offset="0" stop-color="#ffeaa8"/><stop offset=".55" stop-color="#ffd769"/><stop offset="1" stop-color="#ffc536"/></linearGradient>
<linearGradient id="fb6" x1="0" y1="0" x2="1" y2="0"><stop offset="0" stop-color="#f6b828"/><stop offset="1" stop-color="#e7a51c"/></linearGradient>
<clipPath id="fc6"><rect x="3" y="12.2" width="78" height="28.4"/></clipPath></defs><path d="M0 3 A3 3 0 0 1 3 0 H27.5 A3 3 0 0 1 29.8 1.1 L37.5 8.6 V20 H0 Z" fill="url(#fb6)"/><rect x="1.6" y="10.2" width="35" height="7" rx="1" fill="#fff"/><rect x="1.6" y="13.2" width="35" height="4" fill="#f2ead2" opacity=".7"/><path d="M0 17.6 A2.4 2.4 0 0 1 2.4 15.2 H31 A4 4 0 0 0 33.6 14.2 L37.6 10 A4 4 0 0 1 40.4 8.6 H81.2 A2.8 2.8 0 0 1 84 11.4 V62.6 A3 3 0 0 1 81 65.6 H3 A3 3 0 0 1 0 62.6 Z" fill="url(#ff6)"/><path d="M0.6 64 A3 3 0 0 0 3 65.6 H81 A3 3 0 0 0 83.4 64 Z" fill="#eab232" opacity=".75"/></svg>
<svg class="abs" style="left:902.00px;top:162.80px;" width="84" height="66" viewBox="0 0 84 66"><defs><linearGradient id="ff7" x1="0" y1="0" x2="1" y2="1"><stop offset="0" stop-color="#ffeaa8"/><stop offset=".55" stop-color="#ffd769"/><stop offset="1" stop-color="#ffc536"/></linearGradient>
<linearGradient id="fb7" x1="0" y1="0" x2="1" y2="0"><stop offset="0" stop-color="#f6b828"/><stop offset="1" stop-color="#e7a51c"/></linearGradient>
<clipPath id="fc7"><rect x="3" y="12.2" width="78" height="28.4"/></clipPath></defs><path d="M0 3 A3 3 0 0 1 3 0 H27.5 A3 3 0 0 1 29.8 1.1 L37.5 8.6 V20 H0 Z" fill="url(#fb7)"/><rect x="1.6" y="10.2" width="35" height="7" rx="1" fill="#fff"/><rect x="1.6" y="13.2" width="35" height="4" fill="#f2ead2" opacity=".7"/><path d="M0 17.6 A2.4 2.4 0 0 1 2.4 15.2 H31 A4 4 0 0 0 33.6 14.2 L37.6 10 A4 4 0 0 1 40.4 8.6 H81.2 A2.8 2.8 0 0 1 84 11.4 V62.6 A3 3 0 0 1 81 65.6 H3 A3 3 0 0 1 0 62.6 Z" fill="url(#ff7)"/><path d="M0.6 64 A3 3 0 0 0 3 65.6 H81 A3 3 0 0 0 83.4 64 Z" fill="#eab232" opacity=".75"/></svg>
<div class="t" style="left:263.64px;top:245.54px;font-size:12px;line-height:16px;transform:scaleX(0.9768);color:#fff;">FlashIntegro</div>
<div class="t" style="left:384.20px;top:245.54px;font-size:12px;line-height:16px;transform:scaleX(0.9918);color:#fff;">Images</div>
<div class="t" style="left:373.52px;top:260.44px;font-size:12px;line-height:16px;transform:scaleX(0.9510);color:#fff;">enregistrées</div>
<div class="t" style="left:490.30px;top:245.54px;font-size:12px;line-height:16px;transform:scaleX(1.0122);color:#fff;">Pellicule</div>
<div class="t" style="left:584.34px;top:245.54px;font-size:12px;line-height:16px;transform:scaleX(0.9783);color:#fff;">Présentations</div>
<div class="t" style="left:694.01px;top:245.54px;font-size:12px;line-height:16px;transform:scaleX(1.0018);color:#fff;">Projets vidéo</div>
<div class="t" style="left:804.48px;top:245.54px;font-size:12px;line-height:16px;transform:scaleX(0.9540);color:#fff;">Screenshots</div>
<div class="t" style="left:908.02px;top:245.54px;font-size:12px;line-height:16px;transform:scaleX(0.9836);color:#fff;">whatsapp g53</div>
<div class="abs" style="left:1000.00px;top:148.00px;width:106px;height:131px;background:#4d4d4d;border:1px solid #a6a6a6"></div>
<svg class="abs" style="left:1003.50px;top:166.00px;" width="97" height="62" viewBox="0 0 97 62"><defs><clipPath id="cl1"><ellipse cx="51.5" cy="25" rx="28" ry="25"/><circle cx="25.5" cy="37" r="25"/><circle cx="77" cy="42" r="19.7"/><rect x="25.5" y="40" width="51.5" height="21.8"/></clipPath>
<linearGradient id="cd1" x1="0" y1="0" x2="0" y2="1"><stop offset="0" stop-color="#0a58ae"/><stop offset="1" stop-color="#0b66c4"/></linearGradient></defs>
<g clip-path="url(#cl1)"><rect x="-5" y="-5" width="107" height="75" fill="url(#cd1)"/>
<path d="M55.3 28.4 Q66 22 78.2 21.9 V-5 H102 V70 H55.3 Z" fill="#1c8be4"/>
<path d="M-5 70 V-5 H26.4 V11.9 Q42 18 55.3 28.4 V70 Z" fill="#1070d3"/>
<path d="M-5 55.3 L52 30.6 Q55.3 29 58.4 31 L102 57.1 V70 H-5 Z" fill="#28a6ea"/>
<rect x="-5" y="61" width="107" height="1.2" fill="#1a82c4" opacity=".8"/></g></svg>
<svg class="abs" style="left:1004.00px;top:229.00px;" width="17" height="17" viewBox="0 0 17 17"><rect x="0.4" y="0.4" width="16.2" height="16.2" rx="2.2" fill="#fff" stroke="#c8ccd2" stroke-width=".8"/><path d="M4 13 L12 5 M6.6 4.4 H12.6 V10.4" stroke="#1478d4" stroke-width="2" fill="none"/></svg>
<div class="t" style="left:1019.14px;top:245.54px;font-size:12px;line-height:16px;transform:scaleX(0.9907);color:#fff;">Où sont mes</div>
<div class="t" style="left:1033.83px;top:260.44px;font-size:12px;line-height:16px;transform:scaleX(1.0105);color:#fff;">fichiers</div>
<div class="abs" style="left:1219.00px;top:142.00px;width:1px;height:587px;background:#2d2d2d"></div>
<div class="abs" style="left:1220.00px;top:142.00px;width:299px;height:220px;background:#212121"></div>
<div class="abs" style="left:1324.00px;top:205.00px;width:94px;height:94px;border:1px solid #3c3c3c"></div>
<svg class="abs" style="left:1355.50px;top:242.00px;" width="31" height="20" viewBox="0 0 97 62"><defs><clipPath id="cl2"><ellipse cx="51.5" cy="25" rx="28" ry="25"/><circle cx="25.5" cy="37" r="25"/><circle cx="77" cy="42" r="19.7"/><rect x="25.5" y="40" width="51.5" height="21.8"/></clipPath>
<linearGradient id="cd2" x1="0" y1="0" x2="0" y2="1"><stop offset="0" stop-color="#0a58ae"/><stop offset="1" stop-color="#0b66c4"/></linearGradient></defs>
<g clip-path="url(#cl2)"><rect x="-5" y="-5" width="107" height="75" fill="url(#cd2)"/>
<path d="M55.3 28.4 Q66 22 78.2 21.9 V-5 H102 V70 H55.3 Z" fill="#1c8be4"/>
<path d="M-5 70 V-5 H26.4 V11.9 Q42 18 55.3 28.4 V70 Z" fill="#1070d3"/>
<path d="M-5 55.3 L52 30.6 Q55.3 29 58.4 31 L102 57.1 V70 H-5 Z" fill="#28a6ea"/>
<rect x="-5" y="61" width="107" height="1.2" fill="#1a82c4" opacity=".8"/></g></svg>
<svg class="abs" style="left:1242.00px;top:390.00px;" width="28" height="19" viewBox="0 0 28 19"><defs><clipPath id="sc"><path d="M8.9 0 H18.5 L23.3 6 L27.8 8.3 V16.5 L25.9 19 H3.1 L0 15.2 V6 L3.1 4 Z" stroke="#000" stroke-width="1" stroke-linejoin="round"/></clipPath></defs>
<path d="M8.9 0.3 H18.5 L23.3 6 L27.7 8.3 V16.5 L25.9 18.8 H3.1 L0.2 15.2 V6 L3.1 4 Z" fill="#146ed4" stroke="#146ed4" stroke-width=".6" stroke-linejoin="round"/>
<g clip-path="url(#sc)"><path d="M-1 5 L4 3.4 L17 9 L-1 17 Z" fill="#1a7ce2"/><path d="M16.4 8.8 L23.3 5.6 L29 8 V15 Z" fill="#1e8ee8"/><path d="M-1 15.8 L15.4 8.8 Q16.6 8.3 17.8 9 L29 14.6 V20 H-1 Z" fill="#24a2ef"/></g></svg>
<div class="t" style="left:1281.98px;top:391.20px;font-size:15px;line-height:19px;transform:scaleX(1.0031);color:#fff;font-weight:700;">Où sont mes fichiers</div>
<div class="abs" style="left:1242.00px;top:430.00px;width:93px;height:29px;background:#272727;border-radius:5px;border:1px solid #2c2c2c"></div>
<svg class="abs" style="left:1255.00px;top:437.30px;" width="16" height="14" viewBox="0 0 16 14"><path d="M5.6 1.2 H3.2 A2.4 2.4 0 0 0 0.8 3.6 V10.6 A2.4 2.4 0 0 0 3.2 13 H10 A2.4 2.4 0 0 0 12.4 10.6 V9.8" stroke="#f0f0f0" stroke-width="1.1" fill="none" stroke-linecap="round"/>
<path d="M9.6 0.6 L14.6 4.9 L9.6 9.2 V6.9 C6.6 6.7 4.6 7.9 3.4 9.9 C3.6 6.1 5.8 3.3 9.6 3 Z" fill="#0a2a44" stroke="#8cc8f0" stroke-width="1" stroke-linejoin="round"/></svg>
<div class="t" style="left:1277.53px;top:436.54px;font-size:12px;line-height:16px;transform:scaleX(0.9812);color:#fff;">Partager</div>
<div class="t" style="left:1241.64px;top:491.64px;font-size:12px;line-height:16px;transform:scaleX(0.9512);color:#fff;font-weight:700;">Détails</div>
<div class="t" style="left:1242.15px;top:519.44px;font-size:12px;line-height:16px;transform:scaleX(0.9430);color:#d2d2d2;">Type</div>
<div class="t" style="left:1447.33px;top:519.44px;font-size:12px;line-height:16px;transform:scaleX(0.9853);color:#d2d2d2;">Raccourci</div>
<div class="t" style="left:1242.15px;top:541.54px;font-size:12px;line-height:16px;transform:scaleX(0.9220);color:#d2d2d2;">Taille</div>
<div class="t" style="left:1459.92px;top:541.54px;font-size:12px;line-height:16px;transform:scaleX(0.9587);color:#d2d2d2;">1,67 Ko</div>
<div class="t" style="left:1241.43px;top:563.64px;font-size:12px;line-height:16px;transform:scaleX(0.9854);color:#d2d2d2;">Emplacement...</div>
<div class="t" style="left:1349.39px;top:563.64px;font-size:12px;line-height:16px;transform:scaleX(1.0051);color:#d2d2d2;">C:\Utilisateurs\chloe\Images</div>
<div class="t" style="left:1241.36px;top:585.74px;font-size:12px;line-height:16px;transform:scaleX(1.0534);color:#d2d2d2;">Modifié le</div>
<div class="t" style="left:1405.98px;top:585.74px;font-size:12px;line-height:16px;transform:scaleX(1.0023);color:#d2d2d2;">11/03/2021 12:18</div>
<div class="abs" style="left:1242.00px;top:620.00px;width:102px;height:29px;background:#272727;border-radius:5px;border:1px solid #2c2c2c"></div>
<svg class="abs" style="left:1253.50px;top:626.00px;" width="17" height="17" viewBox="0 0 17 17"><path d="M10.2 6.8 L2.4 14.6 A1.5 1.5 0 0 1 0.3 12.5 L8.1 4.7" transform="translate(0.6 0.6)" stroke="#e8e8e8" stroke-width="1.15" fill="none" stroke-linecap="round"/><path d="M8.7 5.3 A4.3 4.3 0 0 1 14.2 0.9 L11.4 3.7 L13.3 5.6 L16.1 2.8 A4.3 4.3 0 0 1 10.7 7.3" stroke="#e8e8e8" stroke-width="1.15" fill="none" stroke-linejoin="round" stroke-linecap="round"/></svg>
<div class="t" style="left:1277.41px;top:626.34px;font-size:12px;line-height:16px;transform:scaleX(1.0024);color:#fff;">Propriétés</div>
</div>
</body></html>
